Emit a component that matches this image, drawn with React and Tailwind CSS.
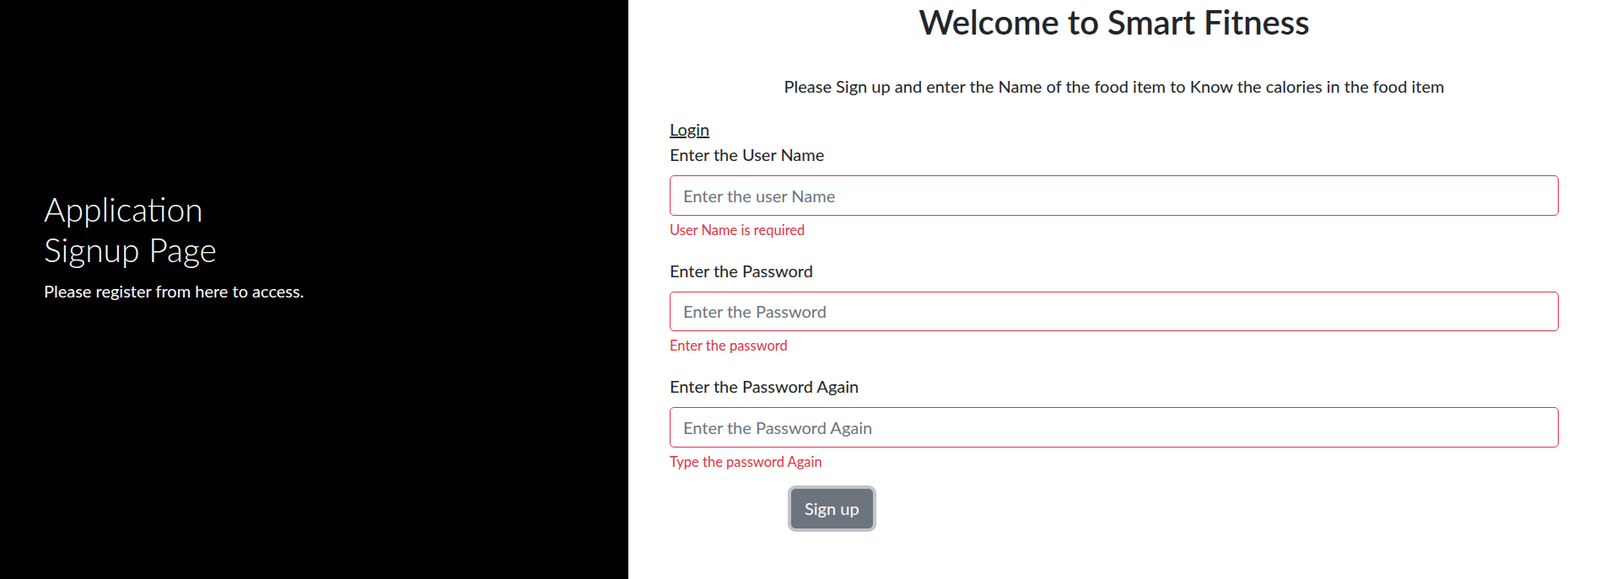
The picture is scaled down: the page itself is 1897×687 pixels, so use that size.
import React, { useState } from "react";

const Field = ({ label, placeholder, error, type = "text", last }) => {
  const [value, setValue] = useState("");
  return (
    <div className={last ? "mb-[19px]" : "mb-[20px]"}>
      <label className="block text-[20px] leading-[30px] mb-[10px]">{label}</label>
      <input
        type={type}
        value={value}
        placeholder={placeholder}
        onChange={(e) => setValue(e.target.value)}
        className="block w-full h-[47.5px] px-[15px] text-[20px] text-[#212529] border border-[#dc3545] rounded-[5px] outline-none placeholder:text-[#6c757d]"
      />
      <div className="mt-[5px] text-[16.5px] leading-[25px] text-[#dc3545]">{error}</div>
    </div>
  );
};

export default function App() {
  return (
    <div className="flex h-[687px] font-['Lato',sans-serif] text-[#212529]">
      <div className="w-[745px] shrink-0 bg-black text-white pl-[52px] pt-[224px]">
        <h2 className="text-[39px] leading-[48px] font-light mb-[10px]">
          Application
          <br />
          Signup Page
        </h2>
        <p className="text-[20px] leading-[30px]">Please register from here to access.</p>
      </div>

      <div className="flex-1 bg-white px-[49px] pt-[2px]">
        <h2 className="text-center text-[40px] leading-[48px] font-semibold">
          Welcome to Smart Fitness
        </h2>
        <p className="text-center text-[20px] leading-[30px] mt-[37px] mb-[21px]">
          Please Sign up and enter the Name of the food item to Know the calories in the food item
        </p>

        <form onSubmit={(e) => e.preventDefault()}>
          <a href="#" className="inline-block text-[20px] leading-[30px] underline text-[#212529]">
            Login
          </a>
          <Field
            label="Enter the User Name"
            placeholder="Enter the user Name"
            error="User Name is required"
          />
          <Field
            label="Enter the Password"
            placeholder="Enter the Password"
            error="Enter the password"
            type="password"
          />
          <Field
            label="Enter the Password Again"
            placeholder="Enter the Password Again"
            error="Type the password Again"
            type="password"
            last
          />
          <button
            type="submit"
            className="ml-[144px] h-[47.5px] px-[15px] text-[20px] leading-[30px] text-white bg-[#6c757d] border border-[#6c757d] rounded-[5px] shadow-[0_0_0_4px_rgba(130,138,145,0.5)]"
          >
            Sign up
          </button>
        </form>
      </div>
    </div>
  );
}
